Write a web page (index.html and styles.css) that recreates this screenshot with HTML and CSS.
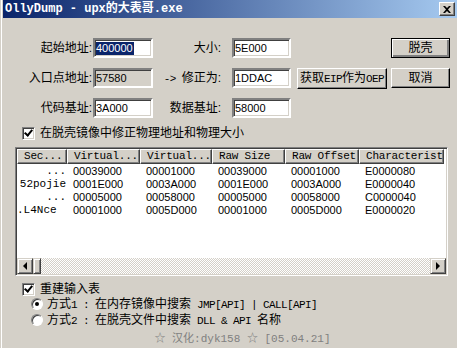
FILE: index.html
```html
<!DOCTYPE html>
<html lang="zh-CN">
<head>
    <meta charset="UTF-8">
    <title>OllyDump</title>
    <link rel="stylesheet" href="styles.css">
</head>
<body>
<div class="window">
    <div class="titlebar">
        <span class="title">OllyDump - upx的大表哥.exe</span>
        <span class="close">
            <svg width="8" height="7" viewBox="0 0 8 7"><path d="M0 0h2l2 2 2-2h2L5 3.5 8 7H6L4 5 2 7H0l3-3.5z" fill="#000"/></svg>
        </span>
    </div>
    <div class="content">
        <div class="fields">
            <label class="lbl">起始地址:</label>
            <div class="edit"><span class="sel">400000</span></div>
            <label class="lbl lbl2">大小:</label>
            <div class="edit">5E000</div>
            <span></span>
            <button class="btn btn-small btn-default">脱壳</button>

            <label class="lbl">入口点地址:</label>
            <div class="edit readonly">57580</div>
            <label class="lbl lbl2"><span class="en">-&gt; </span>修正为:</label>
            <div class="edit">1DDAC</div>
            <button class="btn btn-wide">获取<span class="en">EIP</span>作为<span class="en">OEP</span></button>
            <button class="btn btn-small">取消</button>

            <label class="lbl">代码基址:</label>
            <div class="edit">3A000</div>
            <label class="lbl lbl2">数据基址:</label>
            <div class="edit">58000</div>
        </div>

        <div class="check-row">
            <span class="checkbox checked"></span>
            <span>在脱壳镜像中修正物理地址和物理大小</span>
        </div>

        <div class="listview">
            <div class="lv-header">
                <div class="hd c1">Sec...</div>
                <div class="hd c2">Virtual...</div>
                <div class="hd c3">Virtual...</div>
                <div class="hd c4">Raw Size</div>
                <div class="hd c5">Raw Offset</div>
                <div class="hd c6">Characteristi</div>
            </div>
            <div class="lv-body">
                <div class="lv-row">
                    <div class="cell c1 name right">...</div>
                    <div class="cell c2">00039000</div>
                    <div class="cell c3">00001000</div>
                    <div class="cell c4">00039000</div>
                    <div class="cell c5">00001000</div>
                    <div class="cell c6">E0000080</div>
                </div>
                <div class="lv-row">
                    <div class="cell c1 name right">52pojie</div>
                    <div class="cell c2">0001E000</div>
                    <div class="cell c3">0003A000</div>
                    <div class="cell c4">0001E000</div>
                    <div class="cell c5">0003A000</div>
                    <div class="cell c6">E0000040</div>
                </div>
                <div class="lv-row">
                    <div class="cell c1 name right">...</div>
                    <div class="cell c2">00005000</div>
                    <div class="cell c3">00058000</div>
                    <div class="cell c4">00005000</div>
                    <div class="cell c5">00058000</div>
                    <div class="cell c6">C0000040</div>
                </div>
                <div class="lv-row">
                    <div class="cell c1 name">.L4Nce</div>
                    <div class="cell c2">00001000</div>
                    <div class="cell c3">0005D000</div>
                    <div class="cell c4">00001000</div>
                    <div class="cell c5">0005D000</div>
                    <div class="cell c6">E0000020</div>
                </div>
            </div>
            <div class="hscroll">
                <span class="sb-btn"><span class="arrow-left"></span></span>
                <span class="sb-thumb"></span>
                <span class="sb-track"></span>
                <span class="sb-btn"><span class="arrow-right"></span></span>
            </div>
        </div>

        <div class="options">
            <div class="check-row">
                <span class="checkbox checked"></span>
                <span>重建输入表</span>
            </div>
            <div class="radio-row">
                <span class="radio on"></span>
                <span>方式<span class="en">1 : </span>在内存镜像中搜索<span class="en"> JMP[API] | CALL[API]</span></span>
            </div>
            <div class="radio-row">
                <span class="radio"></span>
                <span>方式<span class="en">2 : </span>在脱壳文件中搜索<span class="en"> DLL &amp; API </span>名称</span>
            </div>
        </div>

        <div class="footer">☆ 汉化:dyk158 ☆ [05.04.21]</div>
    </div>
</div>
</body>
</html>
```

FILE: styles.css
```css
html, body { margin: 0; padding: 0; }
body {
    width: 457px;
    height: 348px;
    overflow: hidden;
    background: #d4d0c8;
    font-family: "Liberation Sans", "Noto Sans CJK SC", sans-serif;
    font-size: 12px;
    line-height: 14px;
    color: #000;
}
.en {
    font-family: "Liberation Mono", monospace;
    font-size: 11px;
    letter-spacing: -0.6px;
    white-space: pre;
}
.window {
    height: 348px;
    border-left: 1px solid #d4d0c8;
    padding-left: 2px;
    background: linear-gradient(to right, #fff 1px, #d4d0c8 1px);
}

/* title bar */
.titlebar {
    height: 18px;
    display: flex;
    align-items: center;
    justify-content: space-between;
    padding: 0 2px;
    background: linear-gradient(to right, #0a246a, #a6caf0);
}
.title {
    color: #fff;
    font-family: "Liberation Mono", "Noto Sans CJK SC", monospace;
    font-weight: bold;
    font-size: 12px;
}
.close {
    width: 16px;
    height: 14px;
    box-sizing: border-box;
    display: flex;
    align-items: center;
    justify-content: center;
    background: #d4d0c8;
    border: 1px solid;
    border-color: #fff #404040 #404040 #fff;
    box-shadow: inset -1px -1px #808080;
}

.content { padding: 20px 0 0 11px; }

/* address fields */
.fields {
    display: grid;
    grid-template-columns: 79px 60px 79px 59px 96px 63px;
    grid-auto-rows: 20px;
    row-gap: 10px;
    align-items: center;
}
.lbl { justify-self: end; padding-right: 1px; white-space: nowrap; }
.lbl2 { padding-right: 11px; }
.edit {
    height: 20px;
    box-sizing: border-box;
    background: #fff;
    border: 2px solid;
    border-color: #808080 #fff #fff #808080;
    box-shadow: inset 1px 1px #404040, inset -1px -1px #d4d0c8;
    padding: 1px 0 0 1px;
    font-size: 11px;
    line-height: 15px;
}
.edit.readonly { background: #d4d0c8; }
.sel { background: #0a246a; color: #fff; padding: 0 1px 1px 0; }
.btn {
    justify-self: end;
    height: 20px;
    box-sizing: border-box;
    background: #d4d0c8;
    border: 1px solid;
    border-color: #fff #000 #000 #fff;
    box-shadow: inset -1px -1px #808080;
    font: inherit;
    padding: 0;
    color: #000;
    white-space: nowrap;
}
.btn-small { width: 59px; }
.btn-wide { width: 90px; height: 21px; }
.btn-default { border-color: #000; box-shadow: inset 1px 1px #fff, inset -2px -2px #808080; }

/* checkboxes and radios */
.check-row {
    display: flex;
    align-items: center;
    gap: 5px;
    height: 14px;
    margin: 8px 0 0 8px;
}
.checkbox {
    width: 13px;
    height: 13px;
    box-sizing: border-box;
    background: #fff;
    border: 1px solid;
    border-color: #808080 #fff #fff #808080;
    box-shadow: inset 1px 1px #404040, inset -1px -1px #d4d0c8;
    position: relative;
}
.checkbox.checked::after {
    content: "";
    position: absolute;
    left: 3px;
    top: 0;
    width: 3px;
    height: 6px;
    border: solid #000;
    border-width: 0 2px 2px 0;
    transform: rotate(40deg);
}
.radio-row {
    display: flex;
    align-items: center;
    gap: 4px;
    height: 16px;
    margin-left: 17px;
}
.radio {
    width: 12px;
    height: 12px;
    box-sizing: border-box;
    border-radius: 50%;
    background: #fff;
    border: 1px solid;
    border-color: #808080 #fff #fff #808080;
    box-shadow: inset 1px 1px #404040;
    position: relative;
}
.radio.on::after {
    content: "";
    position: absolute;
    left: 3px;
    top: 3px;
    width: 4px;
    height: 4px;
    border-radius: 50%;
    background: #000;
}

/* list view */
.listview {
    margin: 7px 0 0 1px;
    width: 433px;
    height: 129px;
    box-sizing: border-box;
    border: 1px solid;
    border-color: #808080 #fff #fff #808080;
    box-shadow: inset 1px 1px #404040, inset -1px -1px #d4d0c8;
    padding: 1px;
    display: flex;
    flex-direction: column;
    background: #fff;
}
.lv-header, .lv-row { display: flex; overflow: hidden; white-space: nowrap; }
.c1 { width: 50px; }
.c2 { width: 73px; }
.c3 { width: 72px; }
.c4 { width: 73px; }
.c5 { width: 74px; }
.c6 { width: 87px; flex-shrink: 0; }
.hd {
    height: 15px;
    box-sizing: border-box;
    flex-shrink: 0;
    background: #d4d0c8;
    border: 1px solid;
    border-color: #fff #404040 #404040 #fff;
    box-shadow: inset -1px -1px #808080;
    padding: 0 0 0 6px;
    font-family: "Liberation Mono", monospace;
    font-size: 11px;
    letter-spacing: -0.2px;
    line-height: 13px;
    overflow: hidden;
}
.hd.c6 { width: 85px; }
.lv-body { flex: 1; padding-top: 1px; }
.lv-row { height: 13px; line-height: 13px; font-size: 11px; }
.cell { flex-shrink: 0; padding-left: 6px; box-sizing: border-box; }
.cell.name { font-family: "Liberation Mono", monospace; padding: 0 1px 0 0; }
.cell.right { text-align: right; }

.hscroll {
    height: 16px;
    display: flex;
}
.sb-btn {
    width: 16px;
    height: 16px;
    box-sizing: border-box;
    background: #d4d0c8;
    border: 1px solid;
    border-color: #d4d0c8 #404040 #404040 #d4d0c8;
    box-shadow: inset 1px 1px #fff, inset -1px -1px #808080;
    display: flex;
    align-items: center;
    justify-content: center;
}
.sb-thumb {
    width: 8px;
    height: 16px;
    box-sizing: border-box;
    background: #d4d0c8;
    border: 1px solid;
    border-color: #d4d0c8 #404040 #404040 #d4d0c8;
    box-shadow: inset 1px 1px #fff, inset -1px -1px #808080;
}
.sb-track {
    flex: 1;
    background: repeating-conic-gradient(#fff 0 25%, #d4d0c8 0 50%) 0 0 / 2px 2px;
}
.arrow-left, .arrow-right { width: 0; height: 0; border: 4px solid transparent; }
.arrow-left { border-right-color: #000; border-left-width: 0; }
.arrow-right { border-left-color: #000; border-right-width: 0; }

.options .check-row { margin-top: 6px; }

.footer {
    margin-top: 2px;
    padding-left: 12px;
    height: 18px;
    line-height: 18px;
    text-align: center;
    width: 433px;
    color: #808080;
    font-family: "Liberation Mono", "Noto Sans CJK SC", monospace;
    font-size: 11px;
}
```
